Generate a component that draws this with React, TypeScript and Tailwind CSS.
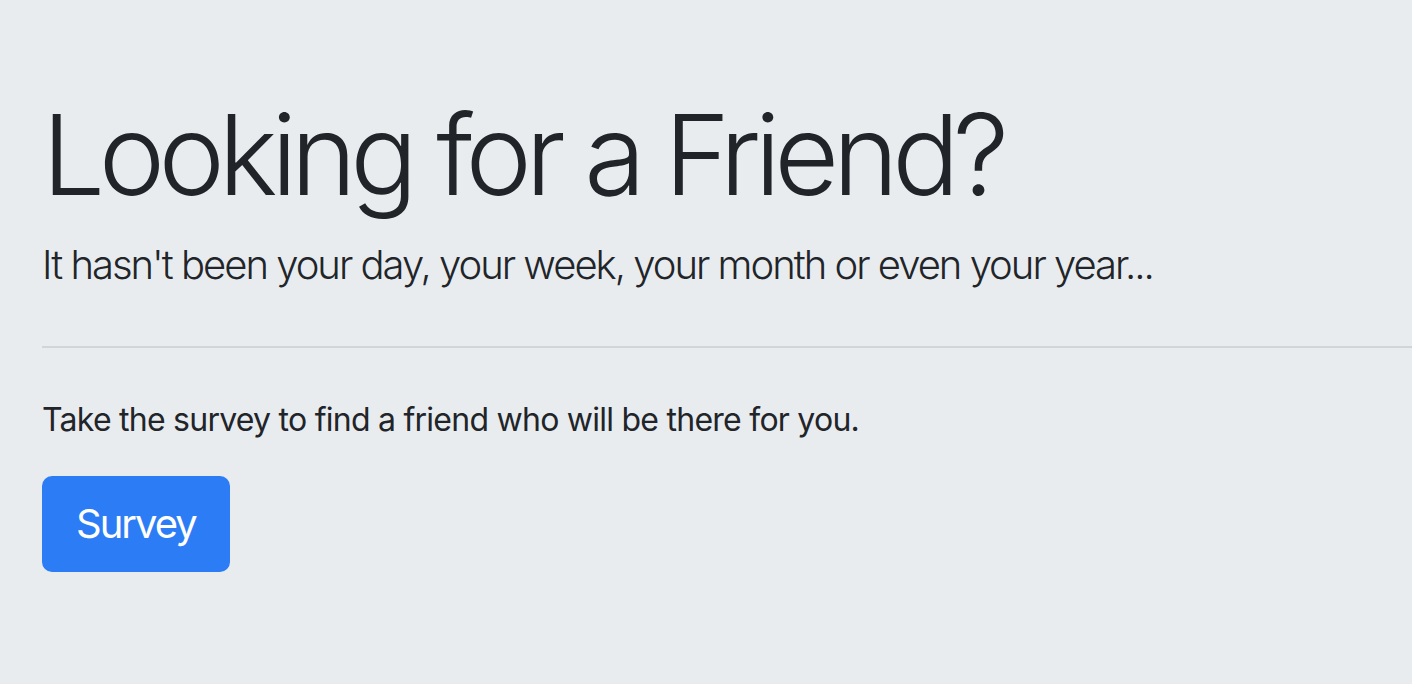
export default function App() {
  return (
    <div className="min-h-screen bg-[#e9ecef] text-[#212529] font-['Inter',sans-serif] overflow-hidden">
      <div className="pl-[42px] pt-[87px]">
        <h1 className="m-0 mb-[14px] text-[112px] leading-[1.2] font-light tracking-[-6.5px]">
          Looking for a Friend?
        </h1>
        <p className="m-0 text-[40px] leading-[1.5] font-light tracking-[-2px]">
          It hasn't been your day, your week, your month or even your year...
        </p>
        <hr className="mt-[51px] mb-[48px] border-0 border-t-2 border-[#d2d5d8]" />
        <p className="m-0 mb-[32px] text-[32px] leading-[1.5] tracking-[-0.75px]">
          Take the survey to find a friend who will be there for you.
        </p>
        <a
          href="#"
          className="inline-block rounded-[10px] border-2 border-[#2c7cf6] bg-[#2c7cf6] px-[32px] py-[16px] text-[40px] leading-[1.5] tracking-[-2px] text-white"
        >
          Survey
        </a>
      </div>
    </div>
  );
}
